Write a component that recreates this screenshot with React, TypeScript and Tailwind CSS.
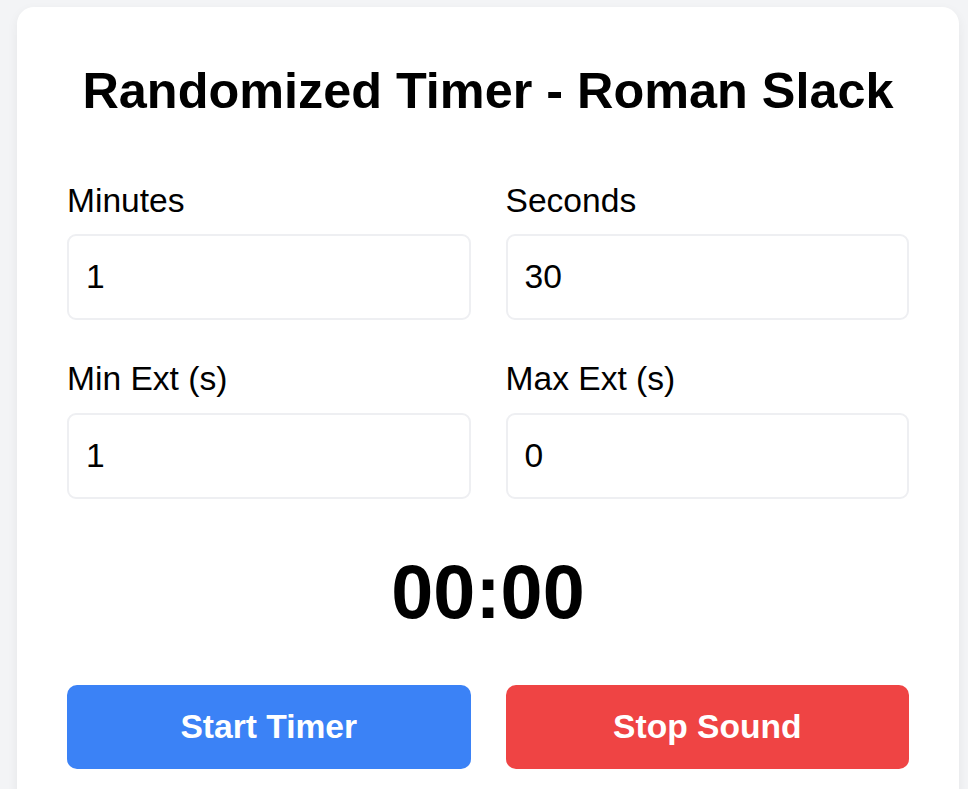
import { useState } from "react"

const fields = [
  { key: "minutes", label: "Minutes", value: "1" },
  { key: "seconds", label: "Seconds", value: "30" },
  { key: "minExt", label: "Min Ext (s)", value: "1" },
  { key: "maxExt", label: "Max Ext (s)", value: "0" },
] as const

export default function App() {
  const [values, setValues] = useState<Record<string, string>>(
    Object.fromEntries(fields.map((f) => [f.key, f.value]))
  )

  return (
    <div
      className="min-h-screen overflow-hidden bg-[#f3f4f6] pl-[17px] pt-[7px] text-black"
      style={{ fontFamily: '"Liberation Sans", Arial, sans-serif' }}
    >
      <div className="w-[942px] rounded-[17px] bg-white p-[50px] shadow-[0_4px_12px_rgba(0,0,0,0.06)]">
        <h1 className="mb-[52px] text-center text-[50.4px] font-bold leading-[67px]">
          Randomized Timer - Roman Slack
        </h1>

        <div className="grid grid-cols-2 gap-x-[35px] gap-y-[34px]">
          {fields.map((f) => (
            <div key={f.key}>
              <label className="mb-[8px] block text-[33.6px] leading-[50.4px]">
                {f.label}
              </label>
              <input
                type="number"
                value={values[f.key]}
                onChange={(e) => setValues({ ...values, [f.key]: e.target.value })}
                className="block h-[86px] w-full rounded-[9px] border-2 border-[#eeeff2] px-[17px] text-[33.6px] outline-none [appearance:textfield] [&::-webkit-inner-spin-button]:appearance-none"
              />
            </div>
          ))}
        </div>

        <div className="my-[50px] text-center text-[75.6px] font-bold leading-[86px]">
          00:00
        </div>

        <div className="grid grid-cols-2 gap-x-[35px]">
          <button className="h-[84px] rounded-[10px] bg-[#3b82f6] text-[33.6px] font-bold text-white">
            Start Timer
          </button>
          <button className="h-[84px] rounded-[10px] bg-[#ef4444] text-[33.6px] font-bold text-white">
            Stop Sound
          </button>
        </div>
      </div>
    </div>
  )
}
